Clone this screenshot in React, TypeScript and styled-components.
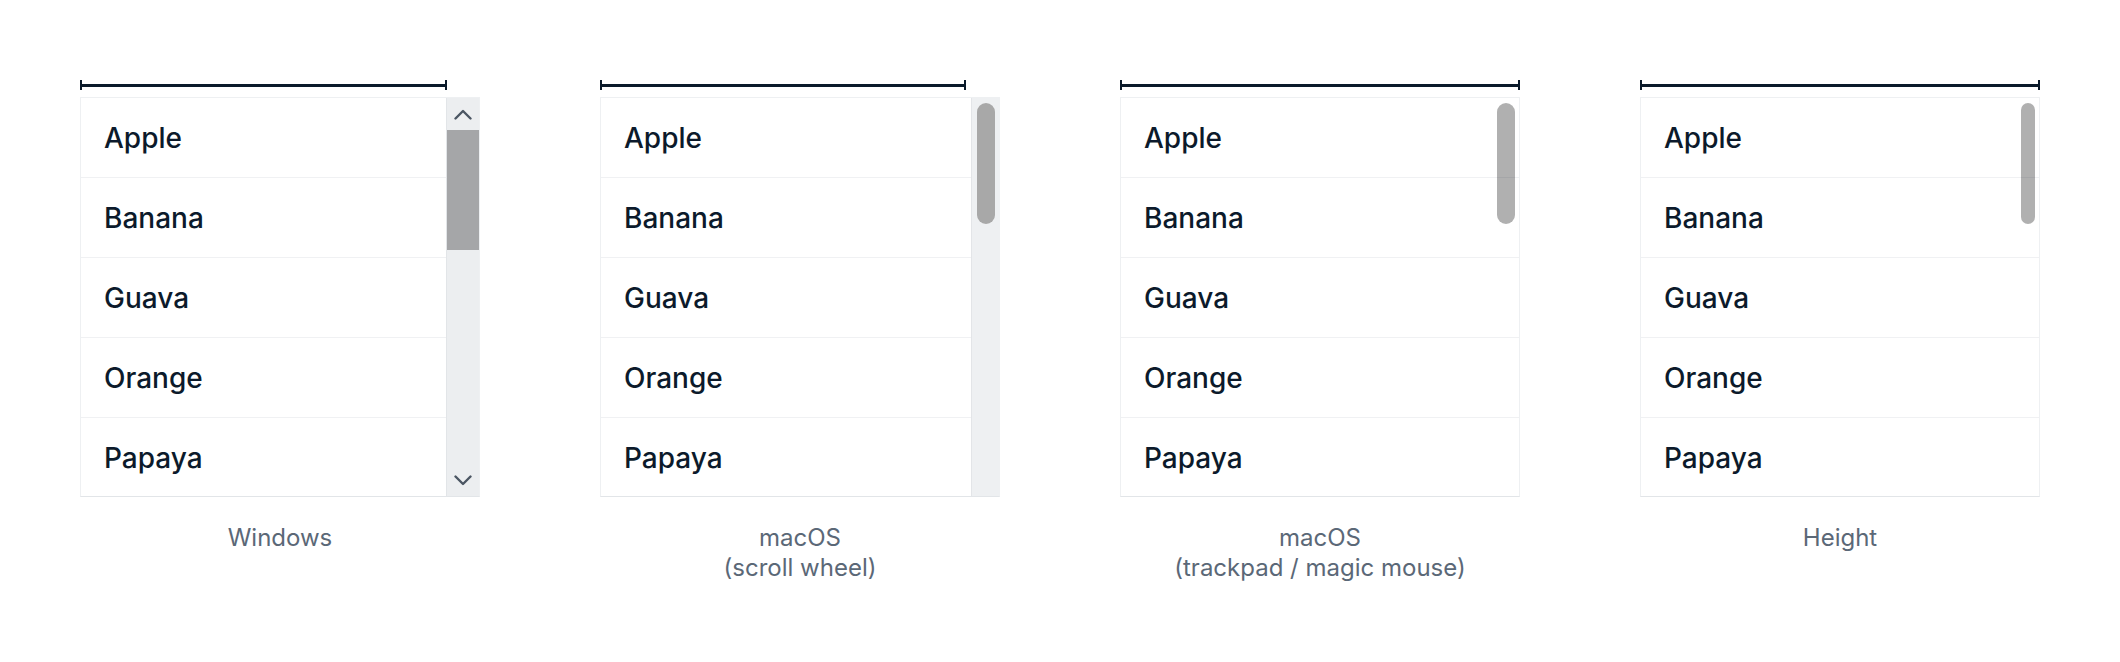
import styled, { createGlobalStyle } from "styled-components";

const GlobalStyle = createGlobalStyle`
  html, body {
    margin: 0;
    background: #ffffff;
    font-family: Inter, "Noto Sans", sans-serif;
  }
`;

type Variant = "windows" | "wheel" | "trackpad" | "height";

interface Demo {
  id: string;
  variant: Variant;
  ruler: number;
  caption: string[];
}

const fruits = ["Apple", "Banana", "Guava", "Orange", "Papaya"];

const demos: Demo[] = [
  { id: "win", variant: "windows", ruler: 367, caption: ["Windows"] },
  { id: "wheel", variant: "wheel", ruler: 366, caption: ["macOS", "(scroll wheel)"] },
  { id: "pad", variant: "trackpad", ruler: 400, caption: ["macOS", "(trackpad / magic mouse)"] },
  { id: "height", variant: "height", ruler: 400, caption: ["Height"] },
];

const Page = styled.div`
  display: flex;
  gap: 120px;
  padding: 80px 80px 0;
`;

const Column = styled.div`
  display: flex;
  flex-direction: column;
  width: 400px;
`;

const Ruler = styled.div<{ $width: number }>`
  position: relative;
  width: ${({ $width }) => $width}px;
  height: 10px;
  margin-bottom: 7px;

  &::before {
    content: "";
    position: absolute;
    left: 0;
    right: 0;
    top: 4px;
    height: 3px;
    background: #0a1a2a;
  }

  &::after {
    content: "";
    position: absolute;
    inset: 0;
    border-left: 2px solid #0a1a2a;
    border-right: 2px solid #0a1a2a;
  }
`;

const ListBox = styled.div`
  position: relative;
  display: flex;
  height: 400px;
  box-sizing: border-box;
  border: 1px solid #eef0f2;
  border-bottom-color: #e2e5e8;
  overflow: hidden;
`;

const Items = styled.ul`
  flex: 1;
  margin: 0;
  padding: 0;
  list-style: none;
  overflow: hidden;
`;

const Item = styled.li`
  display: flex;
  align-items: center;
  height: 79px;
  padding-left: 23px;
  border-bottom: 1px solid #f0f1f3;
  font-size: 28px;
  font-weight: 450;
  color: #0c1a2b;
`;

const WinBar = styled.div`
  display: flex;
  flex-direction: column;
  width: 32px;
  background: #eceef0;
  border-left: 1px solid #e2e5e8;
`;

const WinArrow = styled.div`
  display: flex;
  align-items: center;
  justify-content: center;
  height: 32px;
  color: #4b5663;
`;

const WinThumb = styled.div`
  height: 120px;
  background: #a5a6a8;
`;

const WinTrack = styled.div`
  flex: 1;
`;

const WheelTrack = styled.div`
  width: 28px;
  box-sizing: border-box;
  padding: 5px 4px 0 5px;
  background: #eef0f2;
  border-left: 1px solid #e3e5e8;
`;

const WheelThumb = styled.div`
  height: 121px;
  border-radius: 9px;
  background: #a8a8a8;
`;

const OverlayThumb = styled.div<{ $width: number }>`
  position: absolute;
  top: 5px;
  right: 4px;
  width: ${({ $width }) => $width}px;
  height: 121px;
  border-radius: ${({ $width }) => $width / 2}px;
  background: rgba(0, 0, 0, 0.31);
`;

const Caption = styled.div`
  margin-top: 26px;
  text-align: center;
  font-size: 24px;
  line-height: 30px;
  color: #5b6877;
`;

function Chevron({ up }: { up: boolean }) {
  return (
    <svg width="18" height="11" viewBox="0 0 18 11" fill="none">
      <path
        d={up ? "M1.5 9.5L9 2l7.5 7.5" : "M1.5 1.5L9 9l7.5-7.5"}
        stroke="currentColor"
        strokeWidth={2.4}
        strokeLinecap="round"
        strokeLinejoin="round"
      />
    </svg>
  );
}

function Scrollbar({ variant }: { variant: Variant }) {
  if (variant === "windows") {
    return (
      <WinBar>
        <WinArrow>
          <Chevron up />
        </WinArrow>
        <WinThumb />
        <WinTrack />
        <WinArrow>
          <Chevron up={false} />
        </WinArrow>
      </WinBar>
    );
  }
  if (variant === "wheel") {
    return (
      <WheelTrack>
        <WheelThumb />
      </WheelTrack>
    );
  }
  return <OverlayThumb $width={variant === "height" ? 14 : 18} />;
}

export default function App() {
  return (
    <>
      <GlobalStyle />
      <Page>
        {demos.map((demo) => (
          <Column key={demo.id}>
            <Ruler $width={demo.ruler} />
            <ListBox>
              <Items>
                {fruits.map((fruit) => (
                  <Item key={fruit}>{fruit}</Item>
                ))}
              </Items>
              <Scrollbar variant={demo.variant} />
            </ListBox>
            <Caption>
              {demo.caption.map((line) => (
                <div key={line}>{line}</div>
              ))}
            </Caption>
          </Column>
        ))}
      </Page>
    </>
  );
}
